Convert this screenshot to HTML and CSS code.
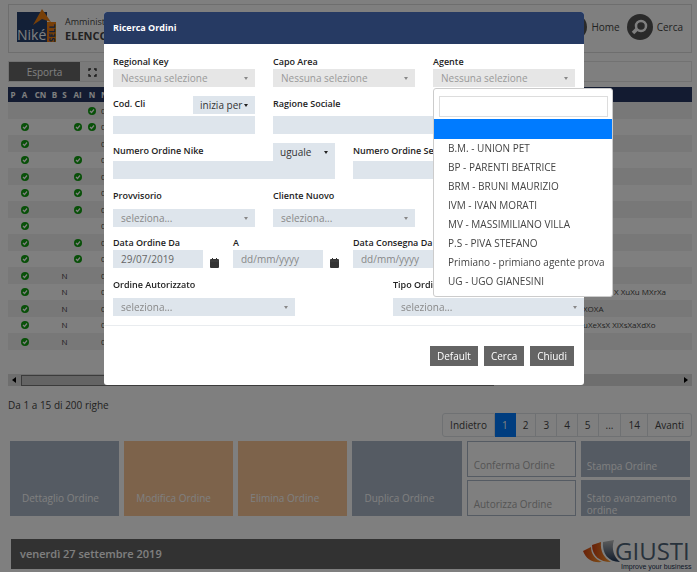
FILE: index.html
```html
<!DOCTYPE html>
<html lang="it">

<head>
  <meta charset="UTF-8">
  <meta name="viewport" content="width=device-width, initial-scale=1.0">
  <title>Elenco Ordini</title>
  <link rel="stylesheet" href="styles.css">
</head>

<body>
  <svg class="sprite" aria-hidden="true">
    <symbol id="check" viewBox="0 0 16 16">
      <circle cx="8" cy="8" r="8" fill="#10a010" />
      <path d="M4 8l3 3 5-6" fill="none" stroke="#fff" stroke-width="2.4" />
    </symbol>
    <symbol id="calendar" viewBox="0 0 9 10">
      <path d="M2 0h1v1h3V0h1v1h1a1 1 0 0 1 1 1v7a1 1 0 0 1-1 1H1a1 1 0 0 1-1-1V2a1 1 0 0 1 1-1h1z" fill="#333" />
      <path d="M0 3h9" stroke="#555" stroke-width=".5" />
    </symbol>
  </svg>

  <div class="page">
    <header class="header">
      <svg class="logo" viewBox="0 0 40 35" role="img" aria-label="Niké Sell">
        <path d="M0 4h30v30H0z" fill="#26406f" />
        <path d="M16 17L25 1l9 13-9-3z" fill="#f08010" />
        <path d="M30 14h9v20h-9z" fill="#f08010" />
        <text class="logo-nike" x="0" y="32">Niké</text>
        <text class="logo-sell" transform="translate(38 34) rotate(-90)">SELL</text>
      </svg>
      <div class="heading">
        <span>Amministr</span>
        <h1>ELENCO</h1>
      </div>
      <nav class="nav">
        <a href="#">
          <svg viewBox="0 0 26 26"><circle cx="13" cy="13" r="13" fill="#555" /><path d="M13 5l8 8h-2v7h-4v-5h-4v5H7v-7H5z" fill="#fff" /></svg>
          Home
        </a>
        <a href="#">
          <svg viewBox="0 0 26 26"><circle cx="13" cy="13" r="13" fill="#555" /><circle cx="14" cy="12" r="5" fill="none" stroke="#fff" stroke-width="2.5" /><path d="M10 15l-4 4" stroke="#fff" stroke-width="3.5" /></svg>
          Cerca
        </a>
      </nav>
    </header>

    <div class="toolbar">
      <button class="export" type="button">Esporta</button>
      <button class="expand" type="button" aria-label="Schermo intero">
        <svg viewBox="0 0 9 9"><path d="M1 3V1h2M6 1h2v2M8 6v2H6M3 8H1V6" fill="none" stroke="#333" stroke-width="1.4" /></svg>
      </button>
    </div>

    <table class="orders">
      <colgroup>
        <col class="c-p"><col class="c-a"><col class="c-cn"><col class="c-b"><col class="c-s"><col class="c-ai"><col class="c-n">
        <col><col class="c-x"><col class="c-y">
      </colgroup>
      <thead>
        <tr><th>P</th><th>A</th><th>CN</th><th>B</th><th>S</th><th>AI</th><th>N</th><th class="left">N</th><th></th><th></th></tr>
      </thead>
      <tbody>
        <tr><td></td><td></td><td></td><td></td><td></td><td></td><td><svg><use href="#check" /></svg></td><td class="left">0</td><td></td><td></td></tr>
        <tr><td></td><td><svg><use href="#check" /></svg></td><td></td><td></td><td></td><td><svg><use href="#check" /></svg></td><td><svg><use href="#check" /></svg></td><td class="left">0</td><td></td><td></td></tr>
        <tr><td></td><td><svg><use href="#check" /></svg></td><td></td><td></td><td></td><td></td><td></td><td class="left">0</td><td></td><td></td></tr>
        <tr><td></td><td><svg><use href="#check" /></svg></td><td></td><td></td><td></td><td><svg><use href="#check" /></svg></td><td></td><td class="left">0</td><td></td><td></td></tr>
        <tr><td></td><td><svg><use href="#check" /></svg></td><td></td><td></td><td></td><td><svg><use href="#check" /></svg></td><td></td><td class="left">0</td><td></td><td></td></tr>
        <tr><td></td><td><svg><use href="#check" /></svg></td><td></td><td></td><td></td><td><svg><use href="#check" /></svg></td><td></td><td class="left">0</td><td></td><td></td></tr>
        <tr><td></td><td><svg><use href="#check" /></svg></td><td></td><td></td><td></td><td><svg><use href="#check" /></svg></td><td></td><td class="left">0</td><td></td><td></td></tr>
        <tr><td></td><td><svg><use href="#check" /></svg></td><td></td><td></td><td></td><td></td><td></td><td class="left">0</td><td></td><td></td></tr>
        <tr><td></td><td><svg><use href="#check" /></svg></td><td></td><td></td><td></td><td><svg><use href="#check" /></svg></td><td></td><td class="left">0</td><td></td><td></td></tr>
        <tr><td></td><td><svg><use href="#check" /></svg></td><td></td><td></td><td></td><td><svg><use href="#check" /></svg></td><td></td><td class="left">0</td><td></td><td></td></tr>
        <tr><td></td><td><svg><use href="#check" /></svg></td><td></td><td></td><td>N</td><td></td><td></td><td class="left">0</td><td></td><td></td></tr>
        <tr><td></td><td><svg><use href="#check" /></svg></td><td></td><td></td><td>N</td><td></td><td></td><td class="left">0</td><td></td><td class="left">X XuXu MXrXa</td></tr>
        <tr><td></td><td><svg><use href="#check" /></svg></td><td></td><td></td><td>N</td><td></td><td></td><td class="left">0</td><td class="left" colspan="2">XOXA</td></tr>
        <tr><td></td><td><svg><use href="#check" /></svg></td><td></td><td></td><td>N</td><td></td><td></td><td class="left">0</td><td class="left" colspan="2">uXeXsX XIXsXaXdXo</td></tr>
        <tr><td></td><td><svg><use href="#check" /></svg></td><td></td><td></td><td>N</td><td></td><td></td><td class="left">0</td><td></td><td></td></tr>
      </tbody>
    </table>

    <div class="scrollbar">
      <svg viewBox="0 0 4 6"><path d="M4 0v6L0 3z" /></svg>
      <div class="thumb"></div>
      <svg viewBox="0 0 4 6"><path d="M0 0v6l4-3z" /></svg>
    </div>

    <p class="info">Da 1 a 15 di 200 righe</p>

    <nav class="pagination">
      <a href="#">Indietro</a>
      <a href="#" class="active">1</a>
      <a href="#">2</a>
      <a href="#">3</a>
      <a href="#">4</a>
      <a href="#">5</a>
      <a href="#">...</a>
      <a href="#">14</a>
      <a href="#">Avanti</a>
    </nav>

    <div class="tiles">
      <button type="button" class="tile tall">Dettaglio Ordine</button>
      <button type="button" class="tile tall orange">Modifica Ordine</button>
      <button type="button" class="tile tall orange">Elimina Ordine</button>
      <button type="button" class="tile tall">Duplica Ordine</button>
      <button type="button" class="tile outline">Conferma Ordine</button>
      <button type="button" class="tile">Stampa Ordine</button>
      <button type="button" class="tile outline">Autorizza Ordine</button>
      <button type="button" class="tile two-lines">Stato avanzamento ordine</button>
    </div>

    <footer class="footer">
      <div class="date">venerdì 27 settembre 2019</div>
      <svg class="giusti" viewBox="0 0 109 32" role="img" aria-label="Giusti">
        <defs>
          <linearGradient id="flame" x1="0" x2="1"><stop offset="0" stop-color="#d04010" /><stop offset="1" stop-color="#ffa030" /></linearGradient>
          <linearGradient id="steel" x1="0" y1="0" x2="0" y2="1"><stop offset="0" stop-color="#bbb" /><stop offset="1" stop-color="#203858" /></linearGradient>
        </defs>
        <path d="M0 12l8-4c0 7 4 12 11 15C9 24 3 20 0 12z" fill="url(#flame)" />
        <path d="M9 6l9-3c-1 9 3 16 10 20C17 23 9 17 9 6z" fill="url(#flame)" />
        <path d="M20 3l11-2c-3 9 0 17 6 22C25 23 19 14 20 3z" fill="url(#steel)" />
        <text class="giusti-name" x="32" y="21">GIUSTI</text>
        <text class="giusti-claim" x="38" y="30">Improve your business</text>
      </svg>
    </footer>
  </div>

  <div class="backdrop">
    <form class="modal">
      <h2 class="modal-header">Ricerca Ordini</h2>

      <div class="modal-body">
        <div class="field w4 disabled">
          <label for="regional">Regional Key</label>
          <div class="select"><select id="regional" disabled><option>Nessuna selezione</option></select></div>
        </div>
        <div class="field w4 disabled">
          <label for="area">Capo Area</label>
          <div class="select"><select id="area" disabled><option>Nessuna selezione</option></select></div>
        </div>
        <div class="field w4 disabled">
          <label for="agente">Agente</label>
          <div class="select">
            <select id="agente" disabled><option>Nessuna selezione</option></select>
            <div class="menu">
              <input type="text" aria-label="Cerca agente">
              <ul role="listbox" aria-label="Agente">
                <li role="option" class="selected" aria-selected="true"></li>
                <li role="option">B.M. - UNION PET</li>
                <li role="option">BP - PARENTI BEATRICE</li>
                <li role="option">BRM - BRUNI MAURIZIO</li>
                <li role="option">IVM - IVAN MORATI</li>
                <li role="option">MV - MASSIMILIANO VILLA</li>
                <li role="option">P.S - PIVA STEFANO</li>
                <li role="option">Primiano - primiano agente prova</li>
                <li role="option">UG - UGO GIANESINI</li>
              </ul>
            </div>
          </div>
        </div>

        <div class="field w4 spaced">
          <div class="top">
            <label for="codcli">Cod. Cli</label>
            <div class="select dark"><select aria-label="Confronto Cod. Cli"><option>inizia per</option></select></div>
          </div>
          <input id="codcli" type="text">
        </div>
        <div class="field w8 spaced">
          <div class="top"><label for="ragione">Ragione Sociale</label></div>
          <input id="ragione" type="text">
        </div>

        <div class="field w6">
          <div class="top">
            <label for="ordnike">Numero Ordine Nike</label>
            <div class="select dark"><select aria-label="Confronto Numero Ordine Nike"><option>uguale</option></select></div>
          </div>
          <input id="ordnike" type="text">
        </div>
        <div class="field w6">
          <div class="top"><label for="ordsede">Numero Ordine Sede</label></div>
          <input id="ordsede" type="text">
        </div>

        <div class="field w4 loose">
          <label for="provvisorio">Provvisorio</label>
          <div class="select"><select id="provvisorio"><option>seleziona...</option></select></div>
        </div>
        <div class="field w4 loose">
          <label for="nuovo">Cliente Nuovo</label>
          <div class="select"><select id="nuovo"><option>seleziona...</option></select></div>
        </div>

        <div class="field w3 first">
          <label for="ordda">Data Ordine Da</label>
          <div class="date-box"><input id="ordda" type="text" value="29/07/2019"><svg><use href="#calendar" /></svg></div>
        </div>
        <div class="field w3">
          <label for="orda">A</label>
          <div class="date-box"><input id="orda" type="text" placeholder="dd/mm/yyyy"><svg><use href="#calendar" /></svg></div>
        </div>
        <div class="field w3">
          <label for="consda">Data Consegna Da</label>
          <div class="date-box"><input id="consda" type="text" placeholder="dd/mm/yyyy"></div>
        </div>

        <div class="field autorizzato loose">
          <label for="autorizzato">Ordine Autorizzato</label>
          <div class="select"><select id="autorizzato"><option>seleziona...</option></select></div>
        </div>
        <div class="field tipo loose">
          <label for="tipo">Tipo Ordine</label>
          <div class="select"><select id="tipo"><option>seleziona...</option></select></div>
        </div>
      </div>

      <div class="modal-footer">
        <button type="button">Default</button>
        <button type="submit">Cerca</button>
        <button type="button">Chiudi</button>
      </div>
    </form>
  </div>
</body>

</html>
```

FILE: styles.css
```css
* {
  padding: 0;
  margin: 0;
  box-sizing: border-box;
}

body {
  font-family: "Open Sans", "Noto Sans", sans-serif;
  font-size: 10px;
  line-height: 14px;
  color: #444;
  background-color: #fff;
}

button,
input,
select {
  font: inherit;
  color: inherit;
  border: 0;
  border-radius: 0;
}

a {
  color: inherit;
  text-decoration: none;
}

.sprite {
  display: none;
}

.page {
  padding: 4px 5px 0 8px;
}

/* header */

.header {
  display: flex;
  align-items: center;
  height: 49px;
  padding: 0 8px;
  border: 1px solid #ddd;
}

.logo {
  width: 40px;
  height: 35px;
  margin-right: 8px;
  margin-bottom: 6px;
}

.logo-nike {
  font-size: 14px;
  fill: #fff;
}

.logo-sell {
  font-size: 8px;
  font-weight: bold;
  fill: #26406f;
}

.heading {
  font-size: 9px;
}

.heading h1 {
  font-size: 11px;
  line-height: 14px;
}

.nav {
  display: flex;
  gap: 7px;
  margin-left: auto;
  margin-bottom: 3px;
}

.nav a {
  display: flex;
  align-items: center;
  gap: 4px;
}

.nav svg {
  width: 26px;
  height: 26px;
}

.toolbar {
  display: flex;
  height: 21px;
  margin: 8px 0 5px;
  border: 1px solid #e4e4e4;
}

.export {
  width: 71px;
  color: #fff;
  background-color: #696969;
}

.expand {
  width: 25px;
  background-color: #f4f4f4;
}

.expand svg {
  width: 9px;
  height: 9px;
  vertical-align: middle;
}

/* orders */

.orders {
  width: 100%;
  table-layout: fixed;
  border-collapse: collapse;
  font-size: 8px;
  line-height: 14px;
  text-align: center;
}

.c-p { width: 10px; }
.c-a { width: 13px; }
.c-cn { width: 19px; }
.c-b { width: 9px; }
.c-s { width: 11px; }
.c-ai { width: 15px; }
.c-n { width: 14px; }
.c-x { width: 31px; }
.c-y { width: 80px; }

.orders th {
  height: 15px;
  color: #fff;
  background-color: #263762;
  white-space: nowrap;
}

.orders td {
  height: 16px;
  white-space: nowrap;
}

.orders tr:nth-child(odd) td {
  height: 17px;
  background-color: #f0f0f0;
}

.orders .left {
  text-align: left;
  padding-left: 2px;
}

.orders svg {
  display: block;
  width: 8px;
  height: 8px;
  margin: 0 auto;
}

.scrollbar {
  display: flex;
  align-items: center;
  gap: 5px;
  height: 12px;
  margin-top: 24px;
  padding: 0 4px;
  background-color: #ddd;
}

.scrollbar svg {
  width: 4px;
  height: 6px;
}

.thumb {
  width: 70%;
  height: 11px;
  margin-right: auto;
  border: 1px solid #777;
  background-color: #c8c8c8;
}

.info {
  margin-top: 12px;
}

.pagination {
  display: flex;
  justify-content: flex-end;
  margin-top: 1px;
}

.pagination a {
  padding: 4px 7px;
  border: 1px solid #dee2e6;
  border-left-width: 0;
}

.pagination a:first-child {
  border-left-width: 1px;
  border-radius: 3px 0 0 3px;
}

.pagination a:last-child {
  border-radius: 0 3px 3px 0;
}

.pagination .active {
  color: #fff;
  background-color: #007bff;
  border-color: #007bff;
}

/* tiles */

.tiles {
  display: grid;
  grid-template-columns: repeat(6, 1fr);
  grid-template-rows: 36px 36px;
  gap: 3px 5px;
  margin: 4px 2px 0;
}

.tile {
  display: flex;
  align-items: flex-end;
  padding: 0 6px 5px;
  color: #fff;
  background-color: #aab6c6;
  text-align: left;
  line-height: 12px;
}

.tall {
  grid-row: span 2;
  padding: 0 12px 12px;
}

.orange {
  background-color: #fac696;
}

.outline {
  color: #aaa;
  background-color: #fff;
  border: 1px solid #aab6c6;
}

.two-lines {
  padding-bottom: 0;
}

.footer {
  display: flex;
  justify-content: space-between;
  margin: 23px 0 0 3px;
}

.date {
  flex: 1;
  height: 30px;
  margin-right: 23px;
  padding-left: 9px;
  color: #fff;
  background-color: #646464;
  font-size: 11px;
  font-weight: 600;
  line-height: 30px;
}

.giusti {
  width: 109px;
  height: 32px;
}

.giusti-name {
  font-size: 24px;
  fill: #506478;
}

.giusti-claim {
  font-family: "Liberation Sans", sans-serif;
  font-size: 7px;
  fill: #203050;
}

/* search dialog */

.backdrop {
  position: fixed;
  inset: 0;
  padding: 12px 9px 0 0;
  background-color: rgba(0, 0, 0, 0.5);
}

.modal {
  width: 70%;
  max-width: 480px;
  margin: 0 auto;
  border-radius: 3px;
  background-color: #fff;
}

.modal-header {
  padding: 0 9px;
  border-radius: 3px 3px 0 0;
  color: #fff;
  background-color: #263a63;
  font-size: 9px;
  line-height: 32px;
}

.modal-body {
  display: grid;
  grid-template-columns: repeat(12, minmax(0, 1fr));
  column-gap: 18px;
  row-gap: 9px;
  padding: 11px 9px 9px;
  border-bottom: 1px solid #e9ecef;
}

.w3 { grid-column: span 3; }
.w4 { grid-column: span 4; }
.w6 { grid-column: span 6; }
.w8 { grid-column: span 8; }

.first {
  grid-column: 1 / span 3;
}

.autorizzato {
  grid-column: 1 / span 5;
}

.tipo {
  grid-column: 8 / span 5;
  margin-right: -9px;
}

.field label {
  display: block;
  color: #222;
  font-size: 9px;
  font-weight: 600;
  line-height: 14px;
}

.field input,
.field select {
  display: block;
  width: 100%;
  height: 18px;
  padding: 0 8px;
  color: #666;
  background-color: #dee5ec;
}

.field input::placeholder {
  color: #888;
}

.field select {
  appearance: none;
  color: #888;
}

.field .dark select {
  padding: 0 7px;
  color: #333;
}

.field.disabled select {
  color: #999;
  background-color: #e6e6e6;
  opacity: 1;
}

.select {
  position: relative;
}

.select::after {
  content: "";
  position: absolute;
  top: 8px;
  right: 7px;
  border: 2px solid transparent;
  border-top: 3px solid #888;
  border-bottom: 0;
}

.dark::after {
  border-top-color: #222;
}

.top {
  display: flex;
  justify-content: space-between;
  height: 18px;
}

.top .select {
  width: 62px;
}

.field .top label {
  line-height: 16px;
}

.spaced .top {
  margin-bottom: 2px;
}

.loose label {
  margin: 1px 0 6px;
}

.date-box {
  display: flex;
  align-items: flex-end;
  gap: 7px;
}

.date-box input {
  flex: 0 0 90px;
}

.date-box svg {
  flex: none;
  width: 9px;
  height: 10px;
}

.menu {
  position: absolute;
  z-index: 1;
  top: 19px;
  left: 0;
  width: 180px;
  padding: 7px 0 5px;
  border: 1px solid #ccc;
  border-radius: 3px;
  background-color: #fff;
}

.field .menu input {
  width: calc(100% - 9px);
  height: 21px;
  margin: 0 4px 2px 5px;
  border: 1px solid #ddd;
  background-color: #fff;
}

.menu ul {
  list-style: none;
}

.menu li {
  padding: 0 14px;
  line-height: 19px;
  white-space: nowrap;
}

.menu .selected {
  height: 20px;
  background-color: #007bff;
}

.modal-footer {
  display: flex;
  justify-content: flex-end;
  gap: 6px;
  padding: 20px 10px 19px;
}

.modal-footer button {
  height: 20px;
  padding: 0 7px;
  color: #fff;
  background-color: #646464;
}
```
